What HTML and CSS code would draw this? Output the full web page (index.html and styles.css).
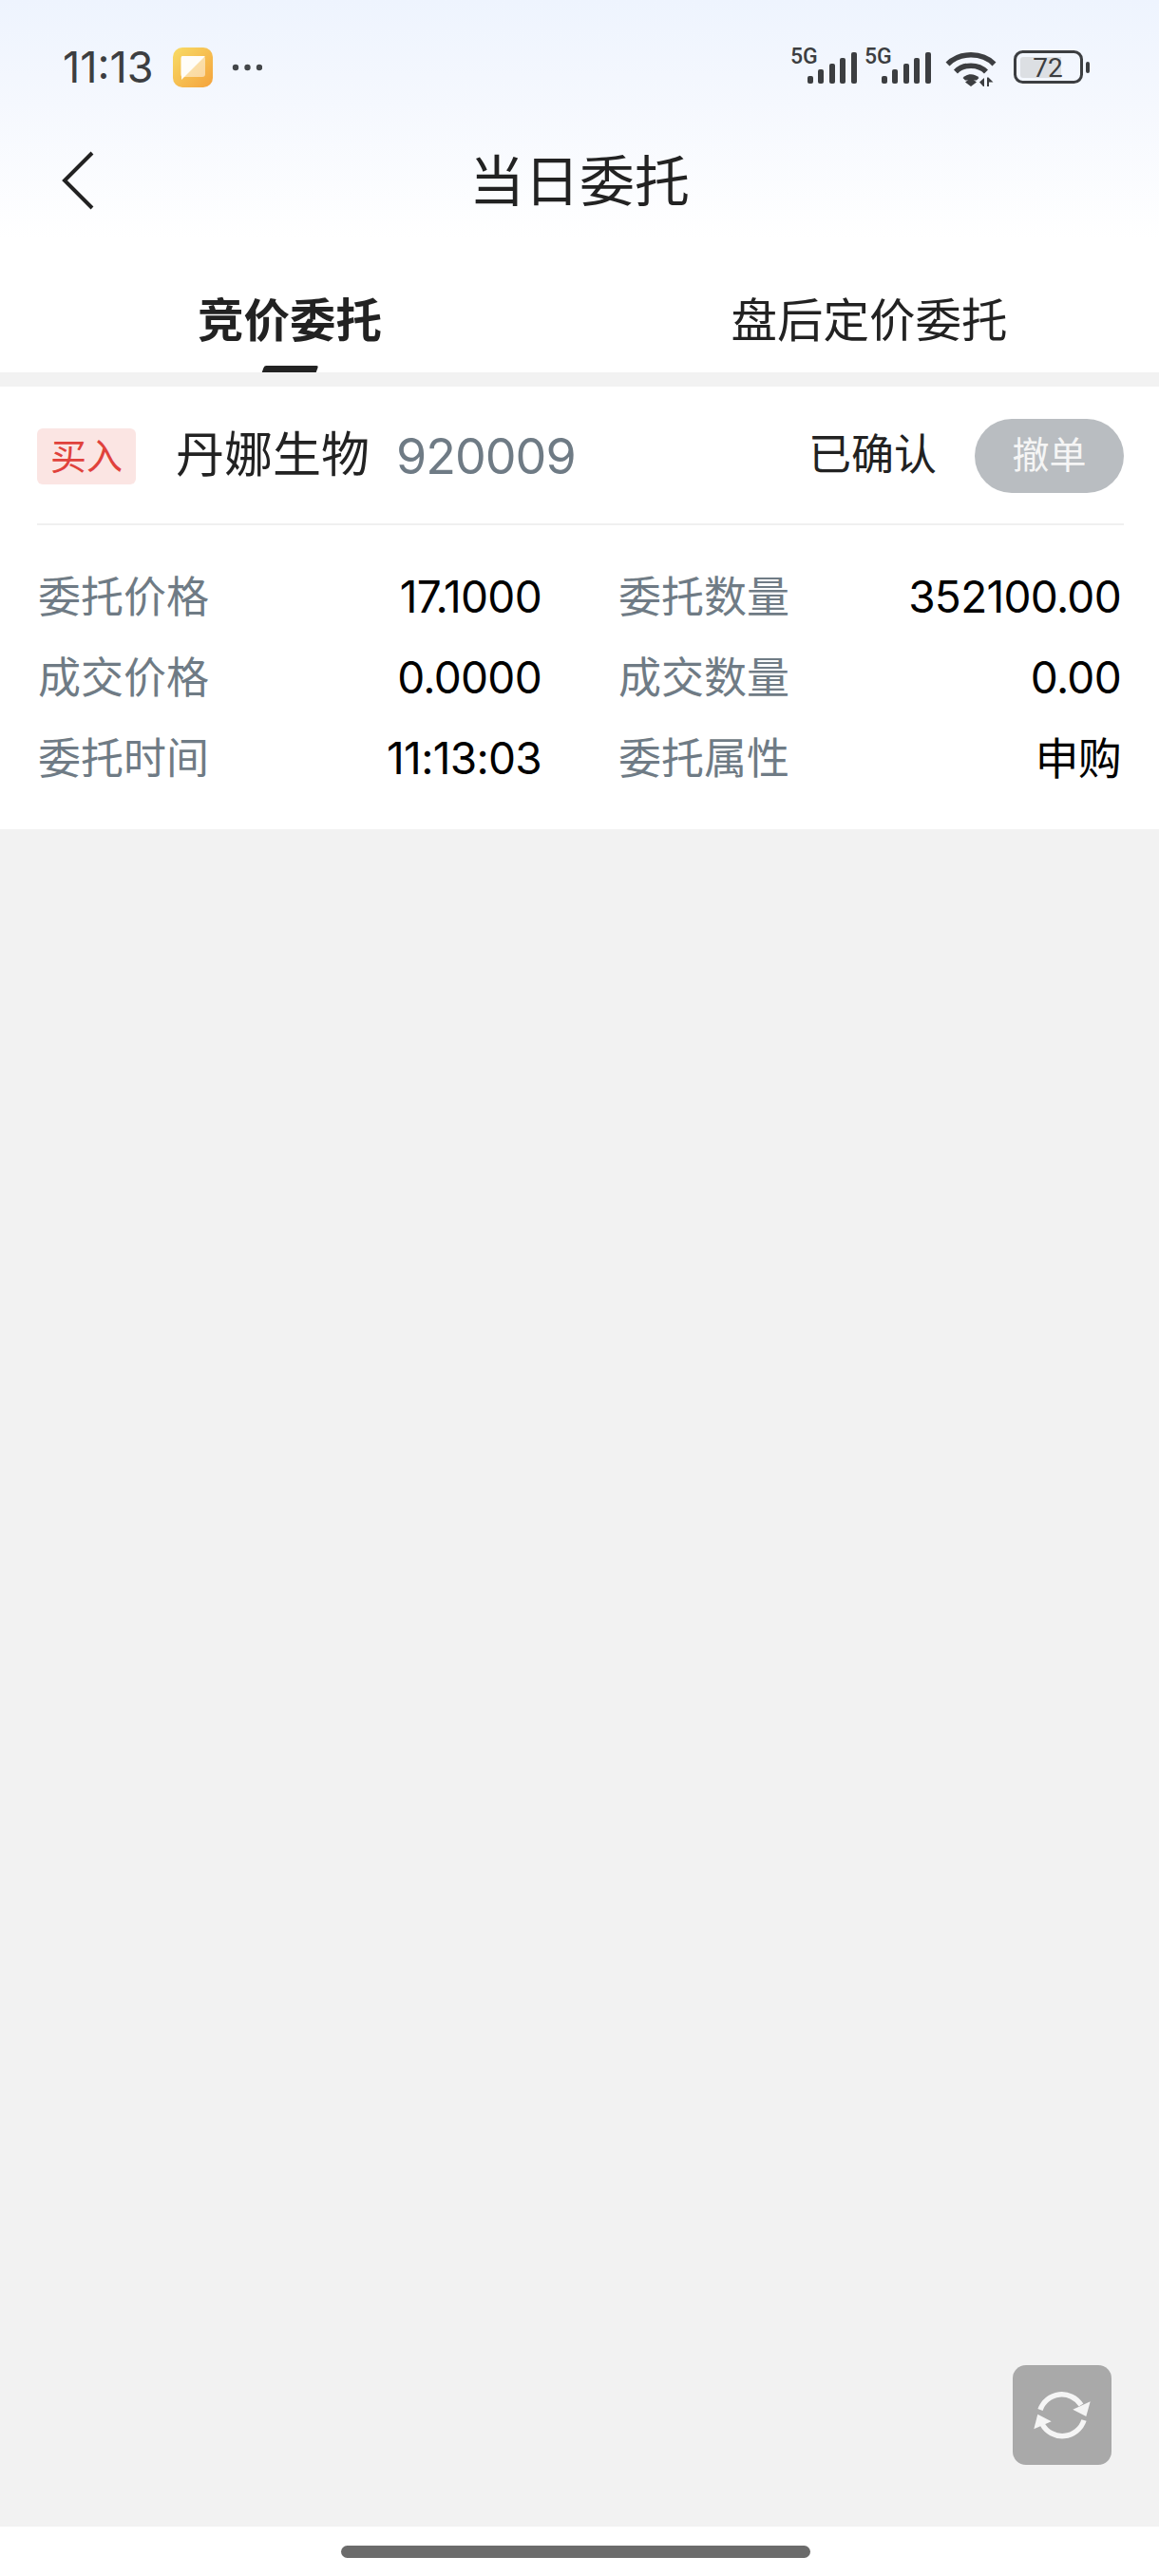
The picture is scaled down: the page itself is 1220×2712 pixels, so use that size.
FILE: index.html
```html
<!DOCTYPE html>
<html lang="zh-CN">
<head>
<meta charset="utf-8">
<title>当日委托</title>
<link rel="stylesheet" href="styles.css">
</head>
<body>
<div class="page">
  <header class="top">
    <div class="status">
      <div class="status-left">
        <span class="clock">11:13</span>
        <svg class="app-icon" width="42" height="42" viewBox="0 0 42 42">
          <defs>
            <linearGradient id="appGrad" x1="0" y1="0" x2="1" y2="1">
              <stop offset="0" stop-color="#f8dc66"/>
              <stop offset="1" stop-color="#f4a23c"/>
            </linearGradient>
          </defs>
          <rect width="42" height="42" rx="10" fill="url(#appGrad)"/>
          <rect x="8" y="9" width="26" height="22" rx="3" fill="#fff" fill-opacity=".5"/>
          <path d="M10 9H34L9 34V10Q9 9 10 9Z" fill="#fff" fill-opacity=".92"/>
        </svg>
        <svg class="dots" width="32" height="8" viewBox="0 0 32 8">
          <circle cx="4" cy="4" r="3.2" fill="#44474a"/>
          <circle cx="16.5" cy="4" r="3.2" fill="#44474a"/>
          <circle cx="29" cy="4" r="3.2" fill="#44474a"/>
        </svg>
      </div>
      <div class="status-right">
        <svg class="signal" width="70" height="42" viewBox="0 0 70 42">
          <text class="sig-text" x="0" y="20">5G</text>
          <g fill="#3c3e41">
            <rect x="18" y="33" width="6" height="8" rx="2"/>
            <rect x="29" y="26" width="6" height="15" rx="2"/>
            <rect x="41" y="20" width="6" height="21" rx="2"/>
            <rect x="52" y="14" width="6" height="27" rx="2"/>
            <rect x="64" y="8" width="6" height="33" rx="2"/>
          </g>
        </svg>
        <svg class="signal" width="70" height="42" viewBox="0 0 70 42">
          <text class="sig-text" x="0" y="20">5G</text>
          <g fill="#3c3e41">
            <rect x="18" y="33" width="6" height="8" rx="2"/>
            <rect x="29" y="26" width="6" height="15" rx="2"/>
            <rect x="41" y="20" width="6" height="21" rx="2"/>
            <rect x="52" y="14" width="6" height="27" rx="2"/>
            <rect x="64" y="8" width="6" height="33" rx="2"/>
          </g>
        </svg>
        <svg class="wifi" width="54" height="38" viewBox="0 0 54 38">
          <g fill="none" stroke="#3c3e41" stroke-width="5.500">
            <path d="M2.500 14.500C15 1.500 39 1.500 51.500 14.500"/>
            <path d="M11 22.500C19 14 35 14 43 22.500"/>
          </g>
          <path d="M18.500 29C23 24 31 24 35.500 29L33 31.500H21Z" fill="#3c3e41"/>
          <path d="M27 29L33 33.500L27 38L21 33.500Z" fill="#3c3e41"/>
          <path d="M36 33.500L41 29V38H40Z M44 38V28.500H45.500L50.500 33.500H46V38Z" fill="#3c3e41"/>
        </svg>
        <svg class="battery" width="80" height="36" viewBox="0 0 80 36">
          <rect x="1.500" y="1.500" width="70" height="32" rx="8" fill="none" stroke="#3c3e41" stroke-width="3"/>
          <path d="M10 7H50V29H10Q7 29 7 26V10Q7 7 10 7Z" fill="#dcdfe3"/>
          <text class="bat-text" x="36" y="28">72</text>
          <rect x="76" y="12" width="4" height="12" rx="2" fill="#3c3e41"/>
        </svg>
      </div>
    </div>
    <nav class="nav">
      <svg class="back" width="36" height="62" viewBox="0 0 36 62">
        <path d="M33 2L4 31L33 60" fill="none" stroke="#222" stroke-width="4"/>
      </svg>
      <h1 class="title">当日委托</h1>
      <span class="nav-side"></span>
    </nav>
    <div class="tabs">
      <div class="tab tab-active">
        <span class="tab-text">竞价委托</span>
        <span class="tab-bar"></span>
      </div>
      <div class="tab">
        <span class="tab-text">盘后定价委托</span>
      </div>
    </div>
  </header>

  <main class="main">
    <section class="card">
      <div class="card-head">
        <span class="tag">买入</span>
        <span class="stock-name">丹娜生物</span>
        <span class="stock-code">920009</span>
        <span class="state">已确认</span>
        <span class="cancel">撤单</span>
      </div>
      <div class="grid">
        <span class="label">委托价格</span><span class="value">17.1000</span>
        <span class="label label-right">委托数量</span><span class="value">352100.00</span>
        <span class="label">成交价格</span><span class="value">0.0000</span>
        <span class="label label-right">成交数量</span><span class="value">0.00</span>
        <span class="label">委托时间</span><span class="value">11:13:03</span>
        <span class="label label-right">委托属性</span><span class="value">申购</span>
      </div>
    </section>
  </main>

  <div class="refresh">
    <svg width="104" height="105" viewBox="0 0 104 105">
      <g fill="none" stroke="#f5f5f5" stroke-width="5.500">
        <path d="M29 47A24 24 0 0 1 72 42"/>
        <path d="M75 58A24 24 0 0 1 31 62"/>
      </g>
      <path d="M81.700 38.300L77.300 54L63.300 46.700Z" fill="#f5f5f5"/>
      <path d="M22.300 67.300L26.300 51.700L40.700 59.300Z" fill="#f5f5f5"/>
    </svg>
  </div>

  <footer class="home">
    <span class="home-bar"></span>
  </footer>
</div>
</body>
</html>
```

FILE: styles.css
```css
* { box-sizing: border-box; }

html, body {
  margin: 0;
  padding: 0;
}

body {
  font-family: Inter, "Noto Sans CJK SC", sans-serif;
  color: #222;
}

.page {
  position: relative;
  width: 1220px;
  height: 2712px;
  display: flex;
  flex-direction: column;
  background: #f2f2f2;
  overflow: hidden;
}

.top {
  height: 392px;
  flex: none;
  background: linear-gradient(180deg, #eef4fe 0, #f5f8fe 110px, #ffffff 250px);
}

/* status bar */
.status {
  height: 142px;
  display: flex;
  align-items: center;
  justify-content: space-between;
  padding: 0 73px 0 66px;
}

.status-left {
  display: flex;
  align-items: center;
}

.clock {
  width: 116px;
  font-size: 45px;
  line-height: 50px;
  color: #3c3e41;
  letter-spacing: 0;
}

.dots {
  margin-left: 20px;
}

.status-right {
  align-self: flex-start;
  margin-top: 47px;
  display: flex;
  align-items: flex-start;
}

.signal {
  margin-right: 8px;
}

.sig-text {
  font-family: Roboto, sans-serif;
  font-size: 23px;
  font-weight: 500;
  fill: #3c3e41;
}

.wifi {
  margin-left: 7px;
  margin-top: 6px;
}

.battery {
  margin-left: 18px;
  margin-top: 6px;
}

.bat-text {
  font-family: Roboto, sans-serif;
  font-size: 28px;
  fill: #3c3e41;
  text-anchor: middle;
}

/* nav */
.nav {
  height: 96px;
  display: grid;
  grid-template-columns: 1fr auto 1fr;
  align-items: center;
}

.back {
  margin-left: 64px;
}

.title {
  margin: 2px 0 0;
  font-size: 58px;
  line-height: 72px;
  font-weight: 400;
  color: #222;
}

/* tabs */
.tabs {
  height: 154px;
  display: grid;
  grid-template-columns: 1fr 1fr;
}

.tab {
  display: flex;
  flex-direction: column;
  align-items: center;
  padding-top: 70px;
}

.tab-text {
  font-size: 48.5px;
  line-height: 60px;
  color: #222;
}

.tab-active .tab-text {
  font-weight: 700;
}

.tab-bar {
  width: 57px;
  height: 7px;
  margin-top: 17px;
  background: #222;
  transform: skewX(-20deg);
  border-radius: 2px 2px 0 0;
}

/* content */
.main {
  flex: 1;
  padding-top: 15px;
}

.card {
  background: #fff;
  padding: 0 37px 0 39px;
}

.card-head {
  height: 146px;
  display: flex;
  align-items: center;
  border-bottom: 2px solid #f0f0f0;
}

.tag {
  width: 104px;
  height: 59px;
  margin-top: 2px;
  border-radius: 6px;
  background: #fbe5e3;
  color: #e0423c;
  font-size: 38px;
  line-height: 59px;
  text-align: center;
}

.stock-name {
  margin-left: 42px;
  font-size: 51px;
  line-height: 60px;
  color: #222;
}

.stock-code {
  margin-left: 28px;
  font-size: 52px;
  line-height: 60px;
  margin-top: 3px;
  color: #6f7b85;
  letter-spacing: -1px;
}

.state {
  margin-left: auto;
  font-size: 45px;
  line-height: 60px;
  color: #222;
}

.cancel {
  width: 157px;
  height: 78px;
  margin-top: 2px;
  margin-left: 40px;
  border-radius: 39px;
  background: #b9bdc1;
  color: #f5f5f5;
  font-size: 39px;
  line-height: 76px;
  text-align: center;
}

.grid {
  display: grid;
  grid-template-columns: 180px 350px 262px 348px;
  grid-auto-rows: 85px;
  padding: 33px 0 32px 1px;
}

.label {
  font-size: 45px;
  line-height: 85px;
  color: #6f7b85;
}

.label-right {
  margin-left: 81px;
}

.value {
  font-size: 46px;
  line-height: 85px;
  text-align: right;
  color: #000;
  letter-spacing: -0.7px;
}

/* floating refresh */
.refresh {
  position: absolute;
  right: 50px;
  bottom: 117px;
  width: 104px;
  height: 105px;
  border-radius: 14px;
  background: #a9a9a9;
}

.refresh svg {
  display: block;
}

/* home indicator */
.home {
  height: 52px;
  flex: none;
  display: flex;
  align-items: center;
  justify-content: center;
  padding-right: 9px;
  background: #fff;
}

.home-bar {
  width: 494px;
  height: 13px;
  border-radius: 7px;
  background: #6b6b6b;
}
```
